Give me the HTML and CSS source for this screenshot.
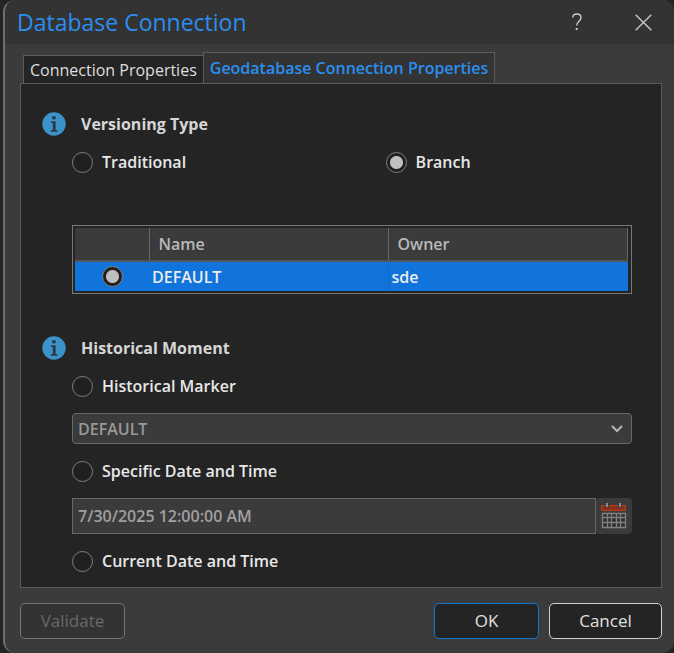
FILE: index.html
```html
<!DOCTYPE html>
<html lang="en">
<head>
<meta charset="utf-8">
<title>Database Connection</title>
<link rel="stylesheet" href="styles.css">
</head>
<body>
<main class="dialog">
  <header class="titlebar">
    <h1 class="title">Database Connection</h1>
    <button class="title-button" type="button" aria-label="Help">
      <svg width="12" height="18" viewBox="0 0 12 18" fill="none" stroke="currentColor" stroke-width="1.4"><path d="M1.7 4.6C1.7 2.2 3.4 1 5.8 1s4.2 1.300 4.200 3.600c0 3.600-4.300 3.700-4.300 8"/><path d="M5.700 15v2" stroke-width="2"/></svg>
    </button>
    <button class="title-button" type="button" aria-label="Close">
      <svg width="17" height="17" viewBox="0 0 17 17" fill="none" stroke="currentColor" stroke-width="1.4"><path d="M.7.7l15.6 15.6M16.3.7L.7 16.3"/></svg>
    </button>
  </header>

  <form class="content">
    <div class="tabs" role="tablist">
      <button class="tab" type="button" role="tab">Connection Properties</button>
      <button class="tab tab-active" type="button" role="tab" aria-selected="true">Geodatabase Connection Properties</button>
    </div>

    <div class="panel" role="tabpanel">
      <section>
        <h2 class="section-title">
          <svg class="info" viewBox="0 0 24 24"><circle cx="12" cy="12" r="11.7" fill="#3c93ca"/><path d="M10.2 4.2h3.4v3h-3.4zM9 9.3h4.6v9h2v1.5H8.8v-1.5h2v-7.5H9z" fill="#2b3740"/></svg>
          Versioning Type
        </h2>
        <div class="group">
          <div class="choices">
            <label class="radio"><input type="radio" name="versioning">Traditional</label>
            <label class="radio"><input type="radio" name="versioning" checked>Branch</label>
          </div>
          <div class="table-frame">
            <table class="versions">
              <thead>
                <tr><th class="col-pick"></th><th class="col-name">Name</th><th>Owner</th></tr>
              </thead>
              <tbody>
                <tr><td class="pick"><input type="radio" name="version" aria-label="DEFAULT" checked></td><td>DEFAULT</td><td>sde</td></tr>
              </tbody>
            </table>
          </div>
        </div>
      </section>

      <section>
        <h2 class="section-title">
          <svg class="info" viewBox="0 0 24 24"><circle cx="12" cy="12" r="11.7" fill="#3c93ca"/><path d="M10.2 4.2h3.4v3h-3.4zM9 9.3h4.6v9h2v1.5H8.8v-1.5h2v-7.5H9z" fill="#2b3740"/></svg>
          Historical Moment
        </h2>
        <div class="group moments">
          <label class="radio"><input type="radio" name="moment">Historical Marker</label>
          <div class="select-wrap">
            <select class="select" aria-label="Historical Marker" disabled><option>DEFAULT</option></select>
            <svg class="chevron" width="12" height="8" viewBox="0 0 12 8" fill="none" stroke="#b4b4b4" stroke-width="2"><path d="M1 1l5 5 5-5"/></svg>
          </div>
          <label class="radio"><input type="radio" name="moment">Specific Date and Time</label>
          <div class="date-row">
            <input class="date" type="text" aria-label="Specific Date and Time" value="7/30/2025 12:00:00 AM" disabled>
            <button class="calendar" type="button" aria-label="Choose a date" disabled>
              <svg width="26" height="26" viewBox="0 0 26 26" fill="none">
                <path d="M.5 2.500h24v5H.5z" fill="#922f16" stroke="#b4401d"/>
                <path d="M4 0h4v5H4zM17 0h4v5h-4z" fill="#3b3b3b"/>
                <path d="M6 0v4M19 0v4" stroke="#8a8a8a" stroke-width="2"/>
                <path d="M1 10h24v15H1z" fill="#303030"/>
                <path d="M1.500 10.500h23v14h-23zM1 14.500h24M1 19.500h24M6.500 10v15M10.500 10v15M15.500 10v15M19.500 10v15" stroke="#808080" stroke-width="1.300"/>
              </svg>
            </button>
          </div>
          <label class="radio"><input type="radio" name="moment">Current Date and Time</label>
        </div>
      </section>
    </div>

    <footer class="actions">
      <button class="action" type="button" disabled>Validate</button>
      <button class="action action-ok" type="button">OK</button>
      <button class="action action-cancel" type="button">Cancel</button>
    </footer>
  </form>
</main>
</body>
</html>
```
FILE: styles.css
```css
* {
  box-sizing: border-box;
}

body {
  margin: 0;
  background: #242424;
  color: #dedede;
  font: 600 16px/24px "Open Sans", "Noto Sans", sans-serif;
}

button,
input,
select {
  font: inherit;
  color: inherit;
}

.dialog {
  min-height: 100vh;
  margin-left: 3px;
  border-left: 2px solid #6e6e6e;
  border-radius: 12px;
  background: #3b3b3b;
  overflow: hidden;
}

.titlebar {
  display: flex;
  align-items: center;
  height: 44px;
  padding: 0 15px 0 12px;
  background: #333;
}

.title {
  flex: 1;
  margin: 0;
  color: #2b8ef0;
  font-size: 23px;
  font-weight: 400;
}

.title-button {
  display: flex;
  align-items: center;
  justify-content: center;
  width: 32px;
  height: 32px;
  margin-left: 34px;
  padding: 0;
  border: 0;
  background: none;
  color: #c8c8c8;
}

.content {
  padding: 8px 12px 14px 15px;
}

.tabs {
  display: flex;
  align-items: flex-end;
  padding-left: 3px;
}

.tab {
  height: 28px;
  padding: 0 6px;
  border: 1px solid #5c5c5c;
  border-width: 1px 0 0 1px;
  background: #242424;
  font-weight: 400;
  line-height: 26px;
  white-space: nowrap;
}

.tab-active {
  height: 31px;
  border-width: 1px 1px 0;
  background: #333;
  color: #2b8ef0;
  font-weight: 600;
}

.panel {
  display: flex;
  flex-direction: column;
  gap: 42px;
  padding: 28px 29px 14px 21px;
  border: 1px solid #5c5c5c;
  background: #242424;
}

.section-title {
  display: flex;
  align-items: center;
  gap: 15px;
  margin: 0;
  color: #d6d6d6;
  font-size: 16px;
  font-weight: 700;
}

.info {
  width: 24px;
  height: 24px;
}

.group {
  padding: 14px 0 0 30px;
}

.choices {
  display: grid;
  grid-template-columns: 56% 44%;
  margin-bottom: 51px;
}

.moments {
  display: flex;
  flex-direction: column;
  gap: 15px;
}

.radio {
  display: flex;
  align-items: center;
  gap: 9px;
  color: #e8e8e8;
}

input[type="radio"] {
  appearance: none;
  flex: none;
  width: 21px;
  height: 21px;
  margin: 0;
  border: 1px solid #808080;
  border-radius: 50%;
  background: #202020;
}

input[type="radio"]:checked {
  background: radial-gradient(circle, #c0c0c0 6px, #202020 7px);
}

.table-frame {
  padding: 2px 3px 2px 2px;
  border: 1px solid #787878;
}

.versions {
  width: 100%;
  border-collapse: collapse;
  table-layout: fixed;
}

.versions th {
  height: 33px;
  padding: 0 9px;
  border-right: 1px solid #696969;
  border-bottom: 2px solid #555;
  background: #3b3b3b;
  color: #b8b8b8;
  font-weight: 600;
  text-align: left;
}

.versions .col-pick {
  width: 74px;
}

.versions .col-name {
  width: 239px;
}

.versions td {
  height: 30px;
  padding: 0 3px;
  background: #1074dc;
  color: #ececec;
}

.versions td + td + td {
  border-left: 1px solid #1467bd;
}

.versions .pick {
  text-align: center;
}

.pick input {
  display: block;
  margin: 0 auto;
}

.select-wrap {
  position: relative;
  display: flex;
}

.select {
  appearance: none;
  width: 100%;
  height: 31px;
  padding: 0 5px;
  border: 1px solid #696969;
  border-radius: 4px;
  background: #3b3b3b;
  color: #999;
  opacity: 1;
}

.chevron {
  position: absolute;
  top: 12px;
  right: 9px;
}

.date-row {
  display: flex;
}

.date {
  flex: 1;
  min-width: 0;
  height: 36px;
  padding: 0 5px;
  border: 1px solid #696969;
  background: #3b3b3b;
  color: #a0a0a0;
}

.calendar {
  display: flex;
  align-items: center;
  justify-content: center;
  width: 36px;
  height: 36px;
  padding: 0;
  border: 0;
  border-radius: 4px;
  background: #3b3b3b;
}

.actions {
  display: flex;
  gap: 10px;
  padding-top: 15px;
}

.action {
  width: 105px;
  height: 36px;
  padding: 0;
  border: 1px solid #757575;
  border-radius: 5px;
  background: #333;
  color: #e0e0e0;
  font-size: 17px;
  font-weight: 400;
}

.action:disabled {
  color: #696969;
}

.action-ok {
  margin-left: auto;
  border-color: #0d78d4;
  background: #242424;
}

.action-cancel {
  width: 113px;
  border-color: #d0d0d0;
  background: #242424;
}
```
